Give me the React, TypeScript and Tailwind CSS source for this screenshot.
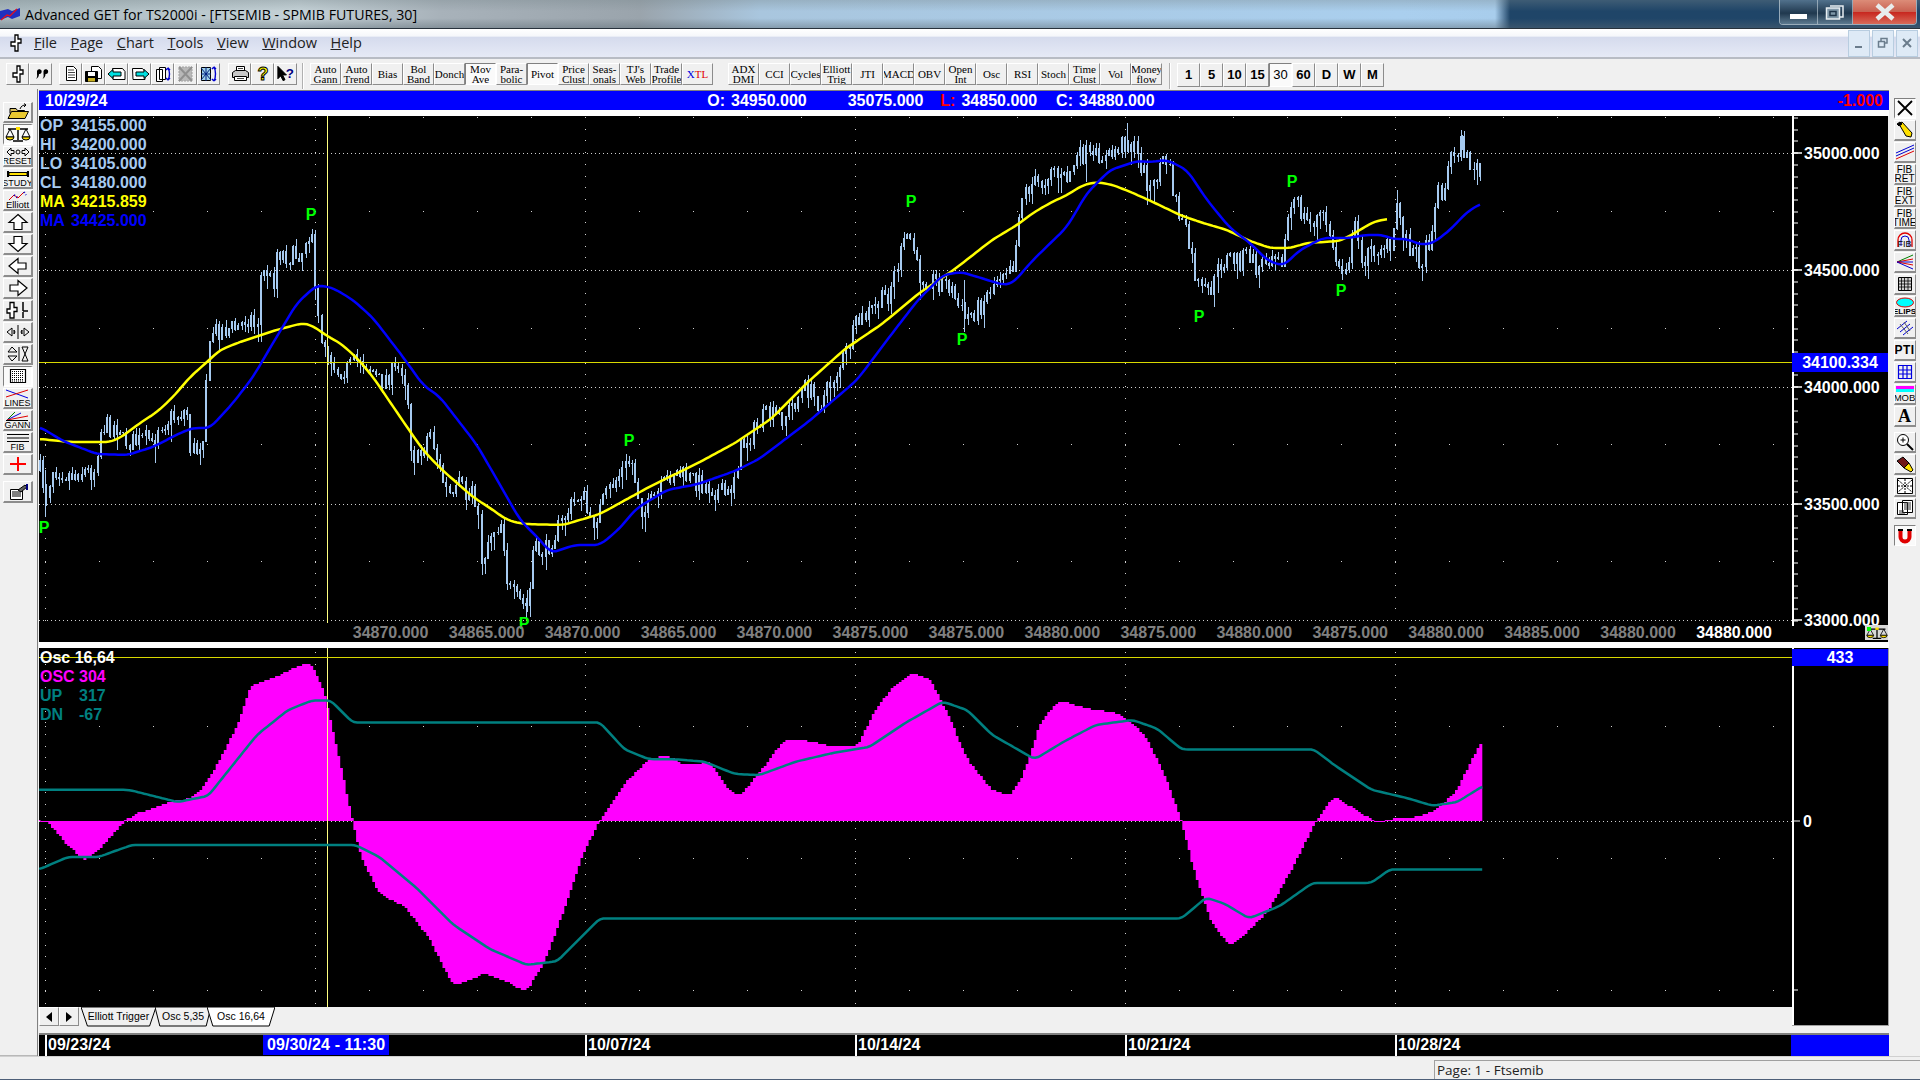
import type { ReactNode } from 'react';

type Pt = [number, number];

// page coordinates read off the screenshot
const PRICE: Pt[] = [[40,470],[45,490],[47,493],[52,468],[60,470],[70,475],[80,470],[90,472],[97,468],[98,433],[105,425],[120,427],[123,440],[135,442],[150,438],[153,452],[157,425],[170,418],[187,410],[190,447],[197,450],[203,435],[207,365],[213,330],[240,327],[243,320],[250,315],[257,330],[260,277],[267,270],[273,285],[277,250],[290,257],[303,250],[307,232],[313,230],[315,293],[320,333],[327,347],[337,370],[350,367],[360,357],[370,367],[380,383],[390,373],[403,367],[408,400],[412,453],[418,460],[430,430],[437,457],[445,487],[453,500],[460,483],[467,500],[473,480],[478,517],[482,563],[490,533],[502,520],[508,587],[517,600],[528,607],[533,550],[545,551],[566,514],[582,490],[591,526],[612,484],[631,459],[643,514],[673,471],[704,484],[729,496],[741,447],[765,416],[784,416],[806,386],[820,404],[845,355],[857,324],[888,294],[908,232],[914,250],[918,275],[949,284],[964,318],[980,306],[998,275],[1002,270],[1010,260],[1015,267],[1017,220],[1023,193],[1033,183],[1043,183],[1052,163],[1060,180],[1068,177],[1075,160],[1085,153],[1093,160],[1100,153],[1107,160],[1117,147],[1127,140],[1135,150],[1143,170],[1152,192],[1160,163],[1167,160],[1173,190],[1180,217],[1187,237],[1197,283],[1203,293],[1213,287],[1220,263],[1230,257],[1240,260],[1248,253],[1257,270],[1267,257],[1277,247],[1283,260],[1288,217],[1295,200],[1303,217],[1310,223],[1320,215],[1328,223],[1333,253],[1342,270],[1350,253],[1355,227],[1363,260],[1373,250],[1383,243],[1392,253],[1397,200],[1402,227],[1408,243],[1415,253],[1422,260],[1430,237],[1437,193],[1445,187],[1450,157],[1462,143],[1467,160],[1478,170],[1482,182]];
const SPIKES: [number, number, number][] = [[45,470,517],[315,276,300],[964,280,332],[1127,123,150],[1397,190,215],[1462,135,150],[482,540,575],[527,590,612]];
const YELLOW: Pt[] = [[40,439],[70,442],[110,442],[120,438],[140,423],[157,412],[173,397],[190,377],[207,362],[220,350],[240,342],[273,331],[303,323],[313,326],[327,336],[340,343],[357,358],[373,377],[390,402],[407,427],[423,450],[440,468],[457,483],[473,497],[490,508],[507,520],[523,524],[563,525],[600,514],[649,487],[698,463],[735,443],[771,419],[808,382],[845,349],[882,324],[918,294],[955,269],[992,240],[1017,225],[1033,213],[1050,203],[1067,195],[1083,185],[1097,182],[1113,185],[1133,193],[1153,202],[1180,215],[1200,222],[1227,230],[1250,241],[1270,248],[1290,248],[1307,243],[1340,241],[1360,230],[1373,222],[1387,219]];
const BLUE: Pt[] = [[40,427],[63,441],[97,454],[127,455],[153,447],[180,433],[193,428],[210,428],[233,403],[253,377],[273,343],[297,303],[317,285],[333,288],[353,300],[373,318],[403,357],[423,385],[440,397],[477,445],[507,497],[520,520],[540,540],[551,553],[575,545],[600,545],[618,530],[637,508],[667,490],[698,484],[735,471],[759,459],[808,422],[857,380],[894,331],[918,300],[943,275],[961,272],[1004,285],[1013,283],[1033,260],[1067,227],[1087,193],[1110,170],[1137,161],[1150,162],[1167,160],[1187,170],[1207,200],[1230,228],[1250,243],[1267,260],[1283,266],[1300,250],[1323,238],[1347,238],[1367,235],[1383,235],[1393,239],[1407,239],[1422,245],[1433,243],[1450,230],[1467,212],[1482,203]];

// oscillator points taken at the smaller preview scale
const S = 1920 / 1568;
const up = (pts: Pt[]): Pt[] => pts.map(([x, y]) => [x * S, y * S]);
const OSC = up([[32,670],[40,672],[55,690],[70,703],[85,690],[100,672],[110,665],[125,660],[140,655],[155,652],[165,645],[180,620],[195,590],[205,560],[225,553],[245,543],[255,543],[265,565],[275,610],[288,670],[295,700],[310,730],[330,740],[350,765],[370,805],[385,800],[395,795],[410,800],[430,810],[445,785],[460,745],[475,700],[490,670],[510,640],[530,620],[545,617],[560,625],[580,622],[595,645],[605,650],[625,625],[640,605],[660,605],[680,610],[700,610],[715,580],[730,560],[745,550],[760,555],[775,585],[790,620],[810,645],[825,650],[835,635],[850,590],[865,572],[885,578],[915,583],[935,600],[950,630],[965,670],[975,710],[990,755],[1005,772],[1020,760],[1035,745],[1055,710],[1075,670],[1090,650],[1105,660],[1125,672],[1140,668],[1160,667],[1175,660],[1190,645],[1211,603]]);
const OSC_UP = up([[32,645],[105,645],[125,650],[145,655],[170,650],[190,625],[210,600],[235,580],[255,572],[270,572],[288,590],[490,590],[510,612],[530,620],[550,620],[575,622],[600,632],[620,633],[650,622],[680,615],[710,610],[740,590],[770,573],[790,580],[810,600],[845,620],[870,605],[895,592],[925,588],[945,595],[965,612],[1073,612],[1090,625],[1120,645],[1150,652],[1170,658],[1190,655],[1211,642]]);
const OSC_DN = up([[32,710],[55,700],[80,700],[108,690],[290,690],[310,700],[340,725],[370,755],[400,775],[430,788],[455,785],[470,770],[490,750],[965,750],[985,733],[1000,738],[1020,750],[1045,740],[1072,721],[1120,721],[1135,710],[1211,710]]);

const PIVOTS: Pt[] = [[44,527],[311,214],[524,623],[629,440],[911,201],[962,339],[1199,316],[1292,181],[1341,290]];
const BOTTOM = ['34870.000','34865.000','34870.000','34865.000','34870.000','34875.000','34875.000','34880.000','34875.000','34880.000','34875.000','34880.000','34885.000','34880.000','34880.000'];
const WEEKS = [45, 315, 585, 855, 1125, 1395];
const DATES: [number, string][] = [[47,'09/23/24'],[587,'10/07/24'],[857,'10/14/24'],[1127,'10/21/24'],[1397,'10/28/24']];

const line = (pts: Pt[]) => pts.map(([x, y]) => `${x.toFixed(1)},${y.toFixed(1)}`).join(' ');

function at(pts: Pt[], x: number) {
  for (let i = 1; i < pts.length; i++) {
    if (x <= pts[i][0]) {
      const [x0, y0] = pts[i - 1];
      const [x1, y1] = pts[i];
      return y0 + ((y1 - y0) * (x - x0)) / (x1 - x0 || 1);
    }
  }
  return pts[pts.length - 1][1];
}

// resample and average so the hand-read curves lose their corners
function smooth(pts: Pt[], r: number): Pt[] {
  const first = pts[0][0];
  const last = pts[pts.length - 1][0];
  const out: Pt[] = [];
  for (let x = first; x <= last; x += 3) {
    let sum = 0;
    let n = 0;
    for (let d = -r; d <= r; d++) {
      sum += at(pts, Math.min(last, Math.max(first, x + d)));
      n++;
    }
    out.push([x, sum / n]);
  }
  return out;
}

function buildCandles() {
  let seed = 7;
  const rnd = () => {
    seed = (seed * 16807) % 2147483647;
    return seed / 2147483647;
  };
  let wicks = '';
  let bodies = '';
  let prev = at(PRICE, 40);
  for (let x = 40; x <= 1483; x += 3.2) {
    const px = Math.round(x);
    const c = at(PRICE, x) + (rnd() - 0.5) * 20;
    const top = Math.min(prev, c);
    const bot = Math.max(prev, c) + 1;
    wicks += `M${px} ${(top - rnd() * 7).toFixed(0)}V${(bot + rnd() * rnd() * 18).toFixed(0)}`;
    bodies += `M${px} ${top.toFixed(0)}V${bot.toFixed(0)}`;
    prev = c;
  }
  SPIKES.forEach(([x, a, b]) => (wicks += `M${x} ${a}V${b}`));
  return { wicks, bodies };
}
const candles = buildCandles();

const oscBars = (() => {
  const pts = smooth(OSC, 3);
  let d = '';
  for (let x = 39; x <= 1483; x += 2.7) {
    const y = Math.round(at(pts, x) / 2) * 2;
    d += `M${x.toFixed(1)} 821V${y}`;
  }
  return d;
})();

const Svg = ({ w = 26, h = 18, children }: { w?: number; h?: number; children: ReactNode }) => (
  <svg width={w} height={h} viewBox={`0 0 ${w} ${h}`} fill="none" stroke="#000" strokeWidth="1">
    {children}
  </svg>
);

const Fork = () => (
  <Svg w={14} h={18}>
    <path d="M6 1h3v4h3v4H9v8H6v-5H2V8h4z" fill="#fff" strokeWidth="1.3" />
  </Svg>
);

const Page = ({ x = 0 }: { x?: number }) => (
  <g transform={`translate(${x} 0)`}>
    <path d="M3.5 1.5h7l3 3v11h-10z" fill="#fff" />
    <path d="M5 5h6M5 7.5h7M5 10h7M5 12.5h7" stroke="#444" />
  </g>
);

const TOP_ICONS: ReactNode[] = [
  <Fork />,
  <Svg w={16} h={16}>
    <path d="M4 5a2.4 2.4 0 1 1 2 3c0 2-1 4-3 5 1-1 1.400-3 1-5zM10.500 5a2.400 2.400 0 1 1 2 3c0 2-1 4-3 5 1-1 1.400-3 1-5z" fill="#000" stroke="none" />
  </Svg>,
  <Svg w={18} h={18}><Page x={1} /></Svg>,
  <Svg w={20} h={18}>
    <path d="M7.500 1.500h7l3 3v9h-10z" fill="#fff" />
    <path d="M1.500 6.500h12v10h-12z" fill="#000" />
    <path d="M4 7h7v4H4z" fill="#fff" stroke="none" />
    <path d="M4 13h7v3.500H4z" fill="#c8b020" stroke="none" />
  </Svg>,
  <Svg w={20} h={18}>
    <path d="M5.500 3.500h10l2.500 3v8h-12z" fill="#fff" />
    <path d="M1 9l5-4.500V7h8v4H6v2.500z" fill="#00e0e0" />
  </Svg>,
  <Svg w={20} h={18}>
    <path d="M2.500 3.500h10l2.500 3v8h-12z" fill="#fff" />
    <path d="M19 9l-5-4.500V7H6v4h8v2.500z" fill="#00e0e0" />
  </Svg>,
  <Svg w={20} h={18}>
    <path d="M6.500 2.500h6v12h-6zM3.500 4.500h6v12h-6z" fill="#fff" />
    <path d="M15 3c2 3 2 9 0 12M15 3l-2 2M15 3l2 2M15 15l-2-2M15 15l2-2" stroke="#0000d0" strokeWidth="1.400" />
  </Svg>,
  <Svg w={20} h={18}>
    <path d="M3 2h13v14H3z" fill="#b8b8b8" stroke="#a0a0a0" strokeDasharray="2 1" />
    <path d="M3 2l13 14M16 2L3 16" stroke="#909090" strokeWidth="2" />
  </Svg>,
  <Svg w={20} h={18}>
    <path d="M2.500 2.500h9v13h-9z" fill="#9fd0e8" />
    <path d="M2 3l10 12M12 3L2 15M7 2v14M2 9h10" stroke="#002080" />
    <path d="M15 2c2 3 2 10 0 14M15 2l-2 2M15 2l2 2M15 16l-2-2M15 16l2-2" stroke="#0000d0" strokeWidth="1.400" />
  </Svg>,
  <Svg w={20} h={18}>
    <path d="M6.500 1.500h8v5h-8z" fill="#fff" />
    <path d="M2.500 7.500l3-2h10l3 2v5h-16z" fill="#c8c8c8" />
    <path d="M4.500 11.500h12v4h-12z" fill="#fff" />
    <path d="M8 3.500h5M7 13.500h7" stroke="#444" />
  </Svg>,
  <Svg w={16} h={18}>
    <text x="8" y="15" textAnchor="middle" fontSize="18" fontWeight="700" fill="#ffff00" stroke="#000" strokeWidth="1" fontFamily="Liberation Sans">?</text>
  </Svg>,
  <Svg w={22} h={18}>
    <path d="M3 1v13l3-3 2.500 5 2-1-2.500-5h4z" fill="#000" />
    <text x="15.500" y="13" textAnchor="middle" fontSize="14" fontWeight="700" fill="#000080" stroke="none" fontFamily="Liberation Sans">?</text>
  </Svg>,
];

const Arrow = ({ points }: { points: string }) => (
  <Svg><polygon points={points} fill="#fff" strokeWidth="1.200" /></Svg>
);

const Scales = ({ w = 26, h = 18 }: { w?: number; h?: number }) => (
  <Svg w={w} h={h}>
    <g transform={`scale(${w / 26} ${h / 18})`}>
      <path d="M13 3v12M8 16h10M3 4h20" strokeWidth="1.500" />
      <path d="M5 4l-4 8h8zM21 4l-4 8h8z" />
      <path d="M1 12a4 3 0 0 0 8 0zM17 12a4 3 0 0 0 8 0z" fill="#ffe000" />
      <path d="M11 2h4v3h-4z" fill="#ffe000" stroke="none" />
    </g>
  </Svg>
);

const Cap = ({ icon, text, size = 'text-[9px]' }: { icon: ReactNode; text: string; size?: string }) => (
  <div className="flex flex-col items-center leading-none">
    {icon}
    <span className={`${size} leading-[8px] text-black`}>{text}</span>
  </div>
);

const LEFT_ICONS: { icon: ReactNode; pressed?: boolean }[] = [
  { icon: <Svg><path d="M5 5.500h6l1.500 2h7v3H5z" fill="#d8c060" /><path d="M3 15.500l3.500-7h17l-3.500 7z" fill="#e8c830" /><path d="M15 6c1-3 3-4 6-4M21 2l-2-1.500M21 2l-2 2" /></Svg> },
  { icon: <Scales />, pressed: true },
  { icon: <Cap text="RESET" icon={<svg width="24" height="10" viewBox="0 0 24 10" fill="none" stroke="#000"><path d="M1 5l4-4v2.500h3v3H5V9zM23 5l-4-4v2.500h-3v3h3V9z" /><circle cx="12" cy="5" r="2" /></svg>} /> },
  { icon: <Cap text="STUDY" icon={<svg width="24" height="10" viewBox="0 0 24 10" fill="none" stroke="#000"><path d="M2 2v6M22 2v6" strokeWidth="2" /><path d="M3 3.500h18v3H3z" fill="#ffe000" /></svg>} /> },
  { icon: <Cap text="Elliott" size="text-[9.500px]" icon={<svg width="24" height="10" viewBox="0 0 24 10" fill="none"><path d="M3 9l5-5 4 3 6-6" stroke="#e00000" /><path d="M8 4l4 3M18 1l2 3" stroke="#0000d0" strokeWidth="2" strokeDasharray="1 2" /></svg>} /> },
  { icon: <Arrow points="13,1.500 22,9.500 17,9.500 17,16.500 9,16.500 9,9.500 4,9.500" /> },
  { icon: <Arrow points="13,16.500 22,8.500 17,8.500 17,1.500 9,1.500 9,8.500 4,8.500" /> },
  { icon: <Arrow points="4,9 13,1.500 13,6 21,6 21,12 13,12 13,16.500" /> },
  { icon: <Arrow points="22,9 13,1.500 13,6 5,6 5,12 13,12 13,16.500" /> },
  { icon: <Svg><path d="M9 1.500v5h3v4H9v6.500H5v-5H2V8h3V1.500z" fill="#fff" strokeWidth="1.300" /><path d="M18 1v9M23 10h-5M18 11v6" strokeWidth="1.500" /></Svg> },
  { icon: <Svg><path d="M2 9l5-4v8zM24 9l-5-4v8zM10 9l-1-2v4zM16 9l1-2v4z" /><path d="M13 2v14" /></Svg> },
  { icon: <Svg><path d="M7 2l5 5H3zM7 16l5-5H3z" /><path d="M14 2v14" /><path d="M17 2h6l-3 7 3 7h-6l3-7z" /></Svg> },
  { icon: <Svg><path d="M5.500 2.500h15v13h-15z" fill="#fff" strokeWidth="1.200" /><path d="M7 4.500h12M7 6.500h12M7 8.500h12M7 10.500h12M7 12.500h12M7 14h12" stroke="#000" strokeDasharray="1 1" /></Svg>, pressed: true },
  { icon: <Cap text="LINES" icon={<svg width="24" height="10" viewBox="0 0 24 10" fill="none"><path d="M1 1l22 8" stroke="#0000e0" /><path d="M1 8l22-7" stroke="#e00000" /></svg>} /> },
  { icon: <Cap text="GANN" icon={<svg width="24" height="10" viewBox="0 0 24 10" fill="none"><path d="M2 9l8-8" stroke="#008000" /><path d="M2 9l14-7" stroke="#0000e0" /><path d="M2 9l21-4" stroke="#e00000" /><path d="M1 9.500h22" stroke="#000" /></svg>} /> },
  { icon: <Cap text="FIB" icon={<svg width="24" height="10" viewBox="0 0 24 10" fill="none" stroke="#000"><path d="M1 1.500h22M1 5h22M1 8.500h22" /></svg>} /> },
  { icon: <Svg><path d="M13 2v14M5 9h16" stroke="#ff0000" strokeWidth="2" /></Svg> },
];

const Txt = ({ a, b }: { a: string; b?: string }) => (
  <span className="flex flex-col items-center font-['Liberation_Serif',serif] text-[11px] leading-[10px] text-black">
    <span>{a}</span>
    {b && <span>{b}</span>}
  </span>
);

const Fib = ({ b }: { b: string }) => (
  <span className="flex flex-col items-center text-[10px] leading-[9px] text-black">
    <span>FIB</span>
    <span>{b}</span>
  </span>
);

const RIGHT_ICONS: ReactNode[][] = [
  [
    <Svg w={18} h={18}><path d="M2 2l14 14M16 2L2 16" strokeWidth="1.800" /></Svg>,
    <Svg w={20} h={18}><path d="M4 3l3-2 10 11-1 4-5-1z" fill="#ffe000" /><path d="M2 3l3-2 2 2-3 2z" fill="#000" /></Svg>,
    <Svg w={20} h={18}><path d="M1 10L19 2" stroke="#0000d0" /><path d="M1 13L19 5" stroke="#0000d0" /><path d="M1 16L19 8" stroke="#e00000" /></Svg>,
    <Fib b="RET" />,
    <Fib b="EXT" />,
    <Fib b="TIME" />,
    <div className="relative flex h-[18px] w-[20px] items-end justify-center">
      <svg className="absolute top-0" width="18" height="18" viewBox="0 0 18 18" fill="none"><path d="M2 16V9a7 7 0 0 1 14 0v7" stroke="#e00000" strokeWidth="1.300" /><path d="M5 15V9a4 4 0 0 1 8 0v6" stroke="#0000d0" /></svg>
      <span className="relative text-[9px] leading-[9px] text-black">FIB</span>
    </div>,
    <Svg w={20} h={18}><path d="M2 9L18 2" stroke="#008000" /><path d="M2 9L18 6" stroke="#e00000" /><path d="M2 9h16" stroke="#0000d0" /><path d="M2 9l16 3" stroke="#e00000" /><path d="M2 9l16 7" stroke="#0000d0" /></Svg>,
    <Svg w={18} h={18}><path d="M2.500 2.500h13v13h-13z" fill="#d0d0d0" /><path d="M5.500 3v12M8.500 3v12M12 3v12M3 6h12M3 9h12M3 12h12" strokeWidth="0.800" /></Svg>,
    <Cap text="ELIPS" size="text-[8px] font-bold" icon={<svg width="20" height="11" viewBox="0 0 20 11"><ellipse cx="10" cy="5.500" rx="8.500" ry="4.500" fill="#00ffff" stroke="#e00000" /></svg>} />,
    <Svg w={20} h={18}><path d="M2 10L12 2M5 13L15 5M8 16L18 8" stroke="#0000d0" /><path d="M5 5l8 10M9 3l6 9" stroke="#606060" /></Svg>,
    <span className="text-[12px] font-bold leading-none tracking-[0.5px] text-black">PTI</span>,
    <Svg w={18} h={18}><path d="M2.500 2.500h13v13h-13zM2.500 7h13M2.500 11h13M7 2.500v13M11 2.500v13" stroke="#0000e0" strokeWidth="1.200" /></Svg>,
    <div className="flex flex-col items-center">
      <div className="h-[3px] w-[18px] bg-[#ff00ff]" />
      <div className="mb-px h-[3px] w-[18px] bg-[#00ffff]" />
      <span className="text-[9.500px] leading-[9px] text-black">MOB</span>
    </div>,
    <span className="font-['Liberation_Serif',serif] text-[18px] font-bold leading-none text-black">A</span>,
  ],
  [
    <Svg w={20} h={18}><circle cx="8" cy="7" r="5.500" fill="#fff" /><path d="M12 11l6 6" strokeWidth="2" /><path d="M5.500 7h5M8 4.500v5" /></Svg>,
    <Svg w={20} h={18}><path d="M2 6l6-4 6 6-5 5z" fill="#701818" /><path d="M9 13l5-5 4 7-2 2z" fill="#ffe000" /></Svg>,
    <Svg w={20} h={18}><path d="M2.500 1.500h15v15h-15z" fill="#fff" /><path d="M3 3l14 12M17 3L3 15M10 2v14M3 9h14" stroke="#000" strokeDasharray="2 1" /></Svg>,
    <Svg w={20} h={18}><path d="M2.500 3.500h10v12h-10zM7.500 1.500h10v12h-10z" fill="#fff" /><path d="M9 4h7M9 6h7M9 8h7M9 10h7M4 12h5M4 14h6" stroke="#333" /></Svg>,
  ],
];

const XBtn = ({ pressed, w, h, className = '', children }: { pressed?: boolean; w: string; h: string; className?: string; children?: ReactNode }) => (
  <div className={`flex shrink-0 items-center justify-center overflow-hidden border ${w} ${h} ${className} ${pressed ? 'border-t-[#808080] border-l-[#808080] border-r-white border-b-white bg-[#fafafa]' : 'border-t-white border-l-white border-r-[#8c8c8c] border-b-[#8c8c8c] bg-[#f0f0f0]'}`}>
    {children}
  </div>
);

const LEFT_TEXT: [string, string?, boolean?][] = [
  ['Auto', 'Gann'], ['Auto', 'Trend'], ['Bias'], ['Bol', 'Band'], ['Donch'], ['Mov', 'Ave', true], ['Para-', 'bolic'], ['Pivot', undefined, true], ['Price', 'Clust'], ['Seas-', 'onals'], ["TJ's", 'Web'], ['Trade', 'Profile'],
];
const RIGHT_TEXT: [string, string?][] = [
  ['ADX', 'DMI'], ['CCI'], ['Cycles'], ['Elliott', 'Trig'], ['JTI'], ['MACD'], ['OBV'], ['Open', 'Int'], ['Osc'], ['RSI'], ['Stoch'], ['Time', 'Clust'], ['Vol'], ['Money', 'flow'],
];
const PERIODS = ['1', '5', '10', '15', '30', '60', 'D', 'W', 'M'];

function TitleBar() {
  return (
    <div className="relative flex h-[28px] shrink-0 items-start overflow-hidden bg-[linear-gradient(to_right,#a9b8bd_0,#c4d1d6_300px,#a8b2ba_440px,#9aa4ac_640px,#a9c6de_760px,#aacfee_1400px,#a8cdec_1495px,#1f4568_1510px,#1f4568_100%)]">
      <div className="absolute inset-0 bg-[linear-gradient(to_bottom,rgba(120,135,140,0.35)_0,rgba(255,255,255,0)_40%,rgba(255,255,255,0)_65%,rgba(90,105,115,0.45)_100%)]" />
      <div className="relative flex h-[25px] items-center gap-[5px] pt-[4px] text-[14.200px] text-black font-['Open_Sans',sans-serif]">
        <svg width="20" height="16" viewBox="0 0 20 16">
          <path d="M0 4l8-2 4 2 8-3v8l-8 3-4-2-8 3z" fill="#2030c0" />
          <path d="M1 13l6-5 3 1 7-7" stroke="#e01020" strokeWidth="1.500" fill="none" />
        </svg>
        <span>Advanced GET for TS2000i - [FTSEMIB - SPMIB FUTURES, 30]</span>
      </div>
      <div className="relative ml-auto mr-[3px] flex h-[25px] overflow-hidden rounded-b-[4px] border border-t-0 border-[#c8d4dc]/70">
        <div className="flex w-[38px] items-center justify-center border-r border-[#c8d4dc]/60 bg-[linear-gradient(to_bottom,#51718c,#20384e_55%,#5d7a90)]">
          <div className="mt-[8px] h-[5px] w-[17px] bg-white" />
        </div>
        <div className="flex w-[35px] items-center justify-center border-r border-[#c8d4dc]/60 bg-[linear-gradient(to_bottom,#51718c,#20384e_55%,#5d7a90)]">
          <svg width="20" height="18" viewBox="0 0 20 18" fill="none" stroke="#e8eef2" strokeWidth="1.500"><path d="M5 3h13v11h-3" /><rect x="1.500" y="5" width="13" height="11" fill="#7f97a8" /><rect x="5" y="8.500" width="6" height="4" stroke="#1f3448" /></svg>
        </div>
        <div className="flex w-[63px] items-center justify-center bg-[linear-gradient(to_bottom,#dc8c78,#c86050_50%,#c82820_52%,#d86a58)]">
          <svg width="20" height="18" viewBox="0 0 20 18" fill="none"><path d="M2 2l16 14M18 2L2 16" stroke="#e8ecec" strokeWidth="4.500" /></svg>
        </div>
      </div>
    </div>
  );
}

function MenuBar() {
  const items: [string, string][] = [['F', 'ile'], ['P', 'age'], ['C', 'hart'], ['T', 'ools'], ['V', 'iew'], ['W', 'indow'], ['H', 'elp']];
  return (
    <div className="flex h-[31px] shrink-0 items-center border-t border-t-[#28323c] border-b-2 border-b-[#b8bcc4] bg-[linear-gradient(to_bottom,#ffffff_0,#f5f7fb_25%,#d5dbed_30%,#e6eaf6_100%)] pl-[9px]">
      <Fork />
      <div className="ml-[11px] flex gap-[13.500px] font-['Open_Sans',sans-serif] text-[14.500px] text-[#222]">
        {items.map(([k, rest]) => (
          <span key={k}><span className="underline">{k}</span>{rest}</span>
        ))}
      </div>
      <div className="ml-auto mr-[2px] flex gap-[2px]">
        {['min', 'max', 'close'].map((b) => (
          <div key={b} className="flex h-[27px] w-[22px] items-center justify-center border border-[#b8cde0] bg-[#deeaf6]">
            <svg width="12" height="12" viewBox="0 0 12 12" fill="none" stroke="#6a7c8c" strokeWidth="1.500">
              {b === 'min' && <path d="M2 10h7" strokeWidth="2" />}
              {b === 'max' && <path d="M4 4V1.500h6V6H8M1.500 4.500h6V10h-6z" />}
              {b === 'close' && <path d="M2 2l8 8M10 2l-8 8" strokeWidth="2" />}
            </svg>
          </div>
        ))}
      </div>
    </div>
  );
}

function Toolbar() {
  const icon = (n: number) => (
    <XBtn key={n} w="w-[23px]" h="h-[22px]">{TOP_ICONS[n]}</XBtn>
  );
  return (
    <div className="flex h-[30px] shrink-0 items-start bg-[#f0f0f0] pl-[6px] pt-[4px]">
      <div className="flex">{[0, 1].map(icon)}</div>
      <div className="ml-[7px] flex">{[2, 3, 4, 5, 6, 7, 8].map(icon)}</div>
      <div className="ml-[8px] flex">{[9, 10, 11].map(icon)}</div>
      <div className="ml-[5px] mr-[6px] h-[26px] w-[2px] border-l border-r border-l-[#b0b0b0] border-r-white" />
      <div className="flex">
        {LEFT_TEXT.map(([a, b, p]) => (
          <XBtn key={a + (b ?? '')} pressed={p} w="w-[31px]" h="h-[22px]"><Txt a={a} b={b} /></XBtn>
        ))}
        <XBtn w="w-[31px]" h="h-[22px]">
          <span className="font-['Liberation_Serif',serif] text-[11px]"><span className="text-[#0000e0]">X</span><span className="text-[#e00000]">TL</span></span>
        </XBtn>
      </div>
      <div className="ml-[15px] flex">
        {RIGHT_TEXT.map(([a, b]) => (
          <XBtn key={a} w="w-[31px]" h="h-[22px]"><Txt a={a} b={b} /></XBtn>
        ))}
      </div>
      <div className="ml-[7px] mr-[6px] h-[26px] w-[2px] border-l border-r border-l-[#b0b0b0] border-r-white" />
      <div className="flex">
        {PERIODS.map((p) => (
          <XBtn key={p} pressed={p === '30'} w="w-[23px]" h="h-[24px]">
            <span className={`text-[13px] text-black ${p === '30' ? '' : 'font-bold'}`}>{p}</span>
          </XBtn>
        ))}
      </div>
    </div>
  );
}

function LeftTools() {
  return (
    <div className="flex w-[37px] shrink-0 flex-col gap-px border-b border-[#b8b8b8] bg-[#f0f0f0] pl-[3px] pt-[13px]">
      {LEFT_ICONS.map((b, i) => (
        <XBtn key={i} pressed={b.pressed} w="w-[30px]" h="h-[21px]" className="border-b-2 border-r-2">{b.icon}</XBtn>
      ))}
      <XBtn w="w-[30px]" h="h-[22px]" className="mt-[5px] border-b-2 border-r-2">
        <Svg><path d="M5.500 6.500h12v10h-12z" fill="#fff" /><path d="M7 9h9M7 11h9M7 13h9" /><path d="M13 7l7-5 2 2-6 5z" fill="#606060" /><path d="M21 1h2v6h-2z" fill="#000080" stroke="none" /></Svg>
      </XBtn>
    </div>
  );
}

function RightTools() {
  return (
    <div className="flex w-[31px] shrink-0 flex-col items-center pt-[9px]">
      <div className="flex flex-col gap-px">
        {RIGHT_ICONS[0].map((ic, i) => (
          <XBtn key={i} pressed={i === 0} w="w-[22px]" h="h-[21px]" className="border-b-2">{ic}</XBtn>
        ))}
      </div>
      <div className="mt-[5px] flex flex-col gap-px">
        {RIGHT_ICONS[1].map((ic, i) => (
          <XBtn key={i} w="w-[22px]" h="h-[21px]" className="border-b-2">{ic}</XBtn>
        ))}
      </div>
      <XBtn pressed w="w-[22px]" h="h-[21px]" className="mt-[6px]">
        <svg width="16" height="18" viewBox="0 0 16 18" fill="none"><path d="M3.500 2v8a4.500 4.500 0 0 0 9 0V2" stroke="#e00000" strokeWidth="4" /><path d="M1 3h5M10 3h5" stroke="#000" strokeWidth="2" /></svg>
      </XBtn>
    </div>
  );
}

function InfoBar() {
  return (
    <div className="relative flex h-[19px] items-center bg-[#0000ff] text-[16px] font-bold text-white">
      <span className="ml-[6px]">10/29/24</span>
      <span className="ml-[600px]">O:</span>
      <span className="ml-[6px]">34950.000</span>
      <span className="ml-[41px]">35075.000</span>
      <span className="ml-[17px] text-[#ff0000]">L:</span>
      <span className="ml-[6px]">34850.000</span>
      <span className="ml-[19px]">C:</span>
      <span className="ml-[6px]">34880.000</span>
      <span className="ml-auto mr-[6px] text-[#ff0000]">-1.000</span>
    </div>
  );
}

const Legend = ({ rows, keyW }: { rows: [string, string, string][]; keyW: string }) => (
  <div className="absolute left-[1px] top-0 text-[16px] font-bold leading-[19px]">
    {rows.map(([k, v, color]) => (
      <div key={k + v} className={`flex whitespace-nowrap ${color}`}>
        <span className={v ? keyW : ''}>{k}</span>
        {v && <span>{v}</span>}
      </div>
    ))}
  </div>
);

function MainChart() {
  return (
    <div className="flex h-[526px]">
      <div className="relative h-full w-[1753px]">
        <svg className="block bg-black" width="1753" height="526" viewBox="39 116 1753 526" fill="none">
          {[153, 270, 387, 504, 620].map((y) => (
            <line key={y} x1="39" x2="1792" y1={y} y2={y} stroke="#d0d0d0" strokeDasharray="1 3" shapeRendering="crispEdges" />
          ))}
          {[117, 211, 328, 444, 561].map((y) => (
            <line key={y} x1="45" x2="1792" y1={y} y2={y} stroke="#d0d0d0" strokeDasharray="1 53" shapeRendering="crispEdges" />
          ))}
          {WEEKS.map((x) => (
            <line key={x} x1={x} x2={x} y1="117" y2="622" stroke="#d0d0d0" strokeDasharray="1 10.700" shapeRendering="crispEdges" />
          ))}
          <path d={candles.wicks} stroke="#a6caf0" shapeRendering="crispEdges" />
          <path d={candles.bodies} stroke="#a6caf0" strokeWidth="2" shapeRendering="crispEdges" />
          <line x1="327.500" x2="327.500" y1="116" y2="623" stroke="#ffff80" />
          <line x1="39" x2="1792" y1="362.500" y2="362.500" stroke="#d8d800" />
          <polyline points={line(smooth(YELLOW, 6))} stroke="#ffff00" strokeWidth="2.500" />
          <polyline points={line(smooth(BLUE, 6))} stroke="#0000ff" strokeWidth="2.500" />
          {PIVOTS.map(([x, y]) => (
            <text key={x} x={x} y={y + 6} textAnchor="middle" fill="#00ff00" className="text-[16px] font-bold">P</text>
          ))}
          {BOTTOM.map((v, i) => (
            <text key={i} x={390.600 + i * 95.960} y="638" textAnchor="middle" fill={i === 14 ? '#ffffff' : '#808080'} className="text-[16px] font-bold">{v}</text>
          ))}
        </svg>
        <Legend
          keyW="w-[31px]"
          rows={[
            ['OP', '34155.000', 'text-[#a6caf0]'],
            ['HI', '34200.000', 'text-[#a6caf0]'],
            ['LO', '34105.000', 'text-[#a6caf0]'],
            ['CL', '34180.000', 'text-[#a6caf0]'],
            ['MA', '34215.859', 'text-[#ffff00]'],
            ['MA', '34425.000', 'text-[#0000ff]'],
          ]}
        />
      </div>
      <div className="relative h-full w-[96px]">
        <svg className="block bg-black" width="96" height="526" viewBox="1792 116 96 526" fill="none">
          <line x1="1793" x2="1793" y1="116" y2="626" stroke="#fff" strokeWidth="2" />
          {Array.from({ length: 44 }, (_, i) => 118 + i * 11.700).map((y) => (
            <line key={y} x1="1793" x2="1798" y1={Math.round(y)} y2={Math.round(y)} stroke="#fff" />
          ))}
          {[[153,'35000.000'],[270,'34500.000'],[387,'34000.000'],[504,'33500.000'],[620,'33000.000']].map(([y, v]) => (
            <g key={v}>
              <line x1="1793" x2="1802" y1={y} y2={y} stroke="#fff" strokeWidth="1.500" />
              <text x="1804" y={Number(y) + 6} fill="#fff" className="text-[16px] font-bold">{v}</text>
            </g>
          ))}
          <rect x="1792" y="353" width="96" height="19" fill="#0000ff" />
          <text x="1840" y="368" textAnchor="middle" fill="#fff" className="text-[16px] font-bold">34100.334</text>
        </svg>
        <div className="absolute bottom-[2px] right-0 flex h-[15px] w-[23px] items-center justify-center bg-[#d8d8d8]">
          <Scales w={22} h={14} />
          <div className="absolute left-[2px] top-[2px] h-[4px] w-[4px] bg-[#00ff00]" />
        </div>
      </div>
    </div>
  );
}

const Tab = ({ label, active, w, className }: { label: string; active?: boolean; w: string; className?: string }) => (
  <div className={`relative flex h-[20px] items-center justify-center ${w} ${className}`}>
    <svg className="absolute inset-0 h-full w-full" viewBox="0 0 70 20" preserveAspectRatio="none" fill={active ? '#fff' : '#f0f0f0'}>
      <polygon points="0,0 6,19 64,19 70,0" stroke="#000" strokeWidth="1" vectorEffect="non-scaling-stroke" />
    </svg>
    <span className="relative text-[10.500px] text-black">{label}</span>
  </div>
);

function OscPanel() {
  return (
    <div className="flex h-[382px]">
      <div className="w-[1753px]">
        <div className="relative h-[359px]">
          <svg className="block bg-black" width="1753" height="359" viewBox="39 648 1753 359" fill="none">
            <line x1="39" x2="1792" y1="821.500" y2="821.500" stroke="#d0d0d0" strokeDasharray="1 3" shapeRendering="crispEdges" />
            {[726, 858, 990].map((y) => (
              <line key={y} x1="45" x2="1792" y1={y} y2={y} stroke="#d0d0d0" strokeDasharray="1 53" shapeRendering="crispEdges" />
            ))}
            {WEEKS.map((x) => (
              <line key={x} x1={x} x2={x} y1="652" y2="1006" stroke="#d0d0d0" strokeDasharray="1 10.700" shapeRendering="crispEdges" />
            ))}
            <path d={oscBars} stroke="#ff00ff" strokeWidth="3" />
            <line x1="327.500" x2="327.500" y1="648" y2="1007" stroke="#ffff80" />
            <line x1="39" x2="1792" y1="657.500" y2="657.500" stroke="#d8d800" />
            <polyline points={line(smooth(OSC_UP, 4))} stroke="#008080" strokeWidth="2.500" />
            <polyline points={line(smooth(OSC_DN, 4))} stroke="#008080" strokeWidth="2.500" />
          </svg>
          <Legend
            keyW="w-[39px]"
            rows={[
              ['Osc 16,64', '', 'text-white'],
              ['OSC', '304', 'text-[#ff00ff]'],
              ['UP', '317', 'text-[#008080]'],
              ['DN', '-67', 'text-[#008080]'],
            ]}
          />
        </div>
        <div className="flex h-[21px] items-start bg-[#f0f0f0]">
          <XBtn w="w-[20px]" h="h-[19px]"><svg width="6" height="10" viewBox="0 0 6 10"><path d="M6 0v10L0 5z" /></svg></XBtn>
          <XBtn w="w-[20px]" h="h-[19px]"><svg width="6" height="10" viewBox="0 0 6 10"><path d="M0 0v10l6-5z" /></svg></XBtn>
          <Tab label="Elliott Trigger" w="w-[75px]" className="ml-[2px]" />
          <Tab label="Osc 5,35" w="w-[56px]" className="-ml-[1px]" />
          <Tab label="Osc 16,64" active w="w-[68px]" className="-ml-[4px]" />
        </div>
      </div>
      <div className="h-[378px] w-[97px] border-r border-b border-[#a0a0a0]">
        <svg className="block bg-black" width="96" height="377" viewBox="1792 648 96 377" fill="none">
          <line x1="1793" x2="1793" y1="648" y2="1026" stroke="#fff" strokeWidth="2" />
          <line x1="1793" x2="1800" y1="821" y2="821" stroke="#fff" />
          <line x1="1793" x2="1798" y1="990" y2="990" stroke="#fff" />
          <rect x="1792" y="649" width="96" height="17" fill="#0000ff" />
          <text x="1840" y="663" textAnchor="middle" fill="#fff" className="text-[16px] font-bold">433</text>
          <text x="1803" y="827" fill="#fff" className="text-[16px] font-bold">0</text>
        </svg>
      </div>
    </div>
  );
}

const DateCell = ({ x, label }: { x: number; label: string }) => (
  <span className="absolute top-0 h-full border-l-2 border-white pl-[1px]" style={{ left: x - 41 }}>{label}</span>
);

function DateBar() {
  return (
    <div className="mt-[3px] flex h-[23px] border-t-2 border-[#808080] bg-black">
      <div className="relative h-full w-[1752px] text-[16px] font-bold leading-[19px] text-white">
        <div className="absolute left-[6px] top-0 h-full w-[2px] bg-white" />
        {DATES.map(([x, d]) => (
          <DateCell key={d} x={x} label={d} />
        ))}
        <span className="absolute left-[224px] top-0 whitespace-nowrap bg-[#0000ff] px-[4px] tracking-[0.1px] leading-[20px]">09/30/24 - 11:30</span>
      </div>
      <div className="h-full w-[98px] bg-[#0000ff]" />
    </div>
  );
}

export default function App() {
  return (
    <div className="flex h-[1080px] w-[1920px] flex-col overflow-hidden bg-[#f0f0f0] font-['Liberation_Sans',Arial,sans-serif]">
      <TitleBar />
      <MenuBar />
      <Toolbar />
      <div className="flex h-[967px] shrink-0">
        <LeftTools />
        <div className="w-[1852px] shrink-0 border-l border-[#808080] pl-px pt-px">
          <div className="border-t border-[#808080]"><InfoBar /></div>
          <div className="h-[6px] bg-white" />
          <MainChart />
          <div className="h-[6px] bg-white" />
          <OscPanel />
          <DateBar />
        </div>
        <RightTools />
      </div>
      <div className="flex flex-1 flex-col border-t border-[#d0d0d0] bg-[#f0f0f0]">
        <div className="ml-[1434px] mt-[3px] flex-1 border-l border-t border-[#a0a0a0] pl-[2px] font-['Open_Sans',sans-serif] text-[13.500px] leading-[18px] text-[#222]">
          Page: 1 - Ftsemib
        </div>
        <div className="h-[2px] shrink-0 bg-[#4d5f78]" />
      </div>
    </div>
  );
}
